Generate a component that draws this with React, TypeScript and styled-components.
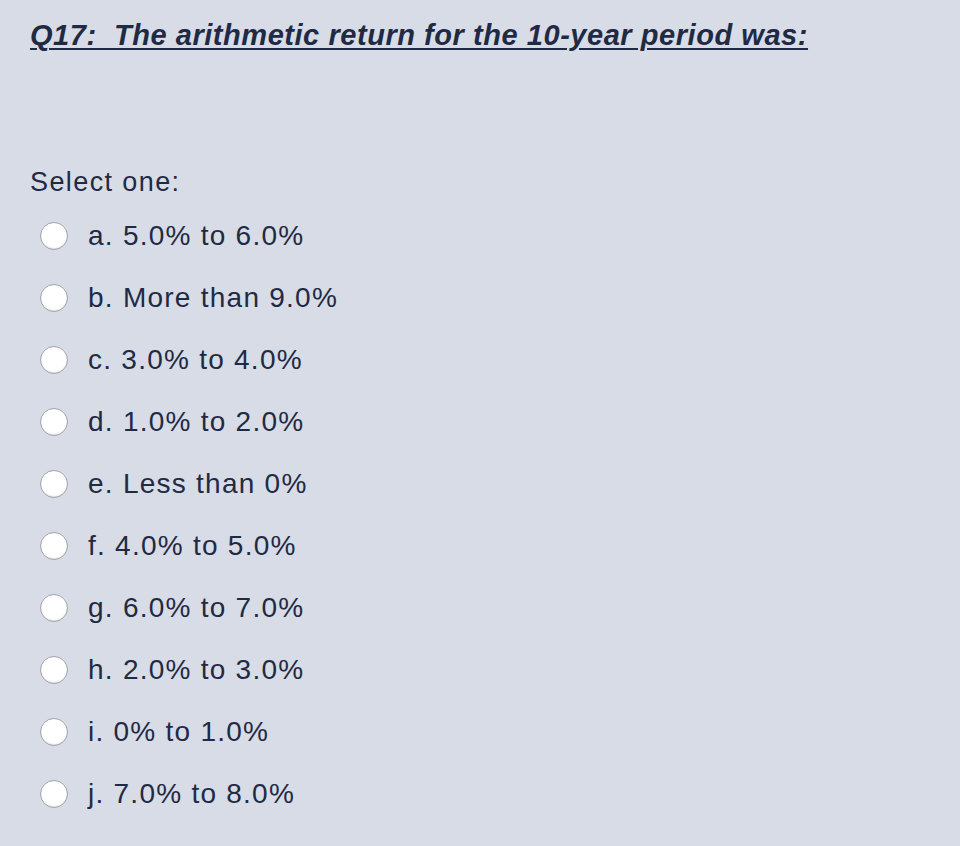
import React from "react";
import styled, { createGlobalStyle } from "styled-components";

const GlobalStyle = createGlobalStyle`
  html, body {
    margin: 0;
    padding: 0;
    background: #d8dce6;
  }
  body {
    font-family: "Liberation Sans", Arial, sans-serif;
    color: #1f2a44;
  }
`;

const Page = styled.div`
  width: 960px;
  height: 846px;
  background: #d8dce6;
  padding: 18px 0 0 30px;
  box-sizing: border-box;
`;

const Title = styled.h1`
  margin: 0;
  font-size: 29px;
  font-weight: bold;
  font-style: italic;
  letter-spacing: 0.55px;
  text-decoration: underline;
  text-decoration-thickness: 2px;
  text-underline-offset: 3px;
  white-space: pre;
  line-height: 34px;
`;

const Prompt = styled.div`
  margin-top: 114px;
  font-size: 27px;
  line-height: 32px;
  letter-spacing: 1.4px;
`;

const Options = styled.div`
  display: flex;
  flex-direction: column;
  gap: 30px;
  margin-top: 22px;
  padding-left: 10px;
`;

const Option = styled.label`
  display: flex;
  align-items: center;
  gap: 20px;
  font-size: 28px;
  line-height: 32px;
  letter-spacing: 1.25px;
`;

const Radio = styled.span`
  width: 28px;
  height: 28px;
  border-radius: 50%;
  box-sizing: border-box;
  border: 1px solid #a2a4a9;
  background: radial-gradient(circle at 50% 40%, #ffffff 60%, #eeeef0 100%);
  box-shadow: inset 0 -1px 1px rgba(0, 0, 0, 0.08);
  flex-shrink: 0;
`;

const options = [
  "a. 5.0% to 6.0%",
  "b. More than 9.0%",
  "c. 3.0% to 4.0%",
  "d. 1.0% to 2.0%",
  "e. Less than 0%",
  "f. 4.0% to 5.0%",
  "g. 6.0% to 7.0%",
  "h. 2.0% to 3.0%",
  "i. 0% to 1.0%",
  "j. 7.0% to 8.0%",
];

export default function App() {
  return (
    <>
      <GlobalStyle />
      <Page>
        <Title>{"Q17:  The arithmetic return for the 10-year period was:"}</Title>
        <Prompt>Select one:</Prompt>
        <Options>
          {options.map((o) => (
            <Option key={o}>
              <Radio />
              <span>{o}</span>
            </Option>
          ))}
        </Options>
      </Page>
    </>
  );
}
